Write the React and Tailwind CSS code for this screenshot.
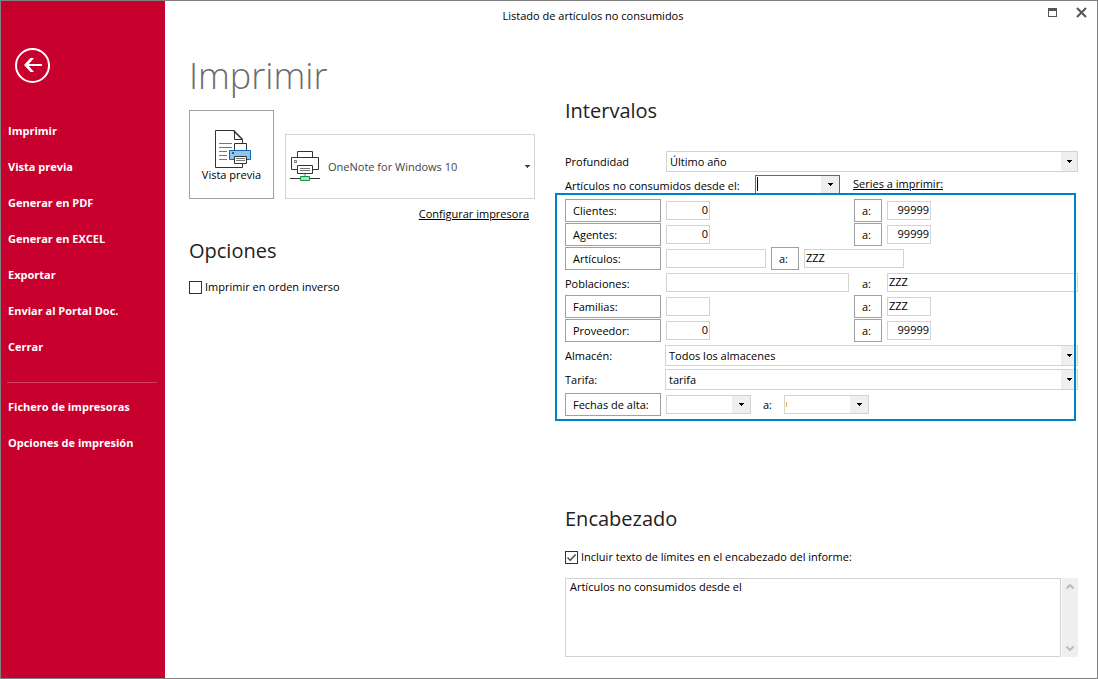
import React, { useState } from "react";

const mainLinks = [
  "Imprimir",
  "Vista previa",
  "Generar en PDF",
  "Generar en EXCEL",
  "Exportar",
  "Enviar al Portal Doc.",
  "Cerrar",
];
const extraLinks = ["Fichero de impresoras", "Opciones de impresión"];

const Arrow = ({ className = "" }) => (
  <svg width="5" height="3" viewBox="0 0 5 3" className={className} shapeRendering="crispEdges" aria-hidden="true">
    <path d="M0 0h5v1H0zM1 1h3v1H1zM2 2h1v1H2z" fill="currentColor" />
  </svg>
);

const BackIcon = () => (
  <svg width="36" height="36" viewBox="0 0 36 36" fill="none" stroke="#fff" aria-hidden="true">
    <circle cx="17.5" cy="17.5" r="16.5" strokeWidth="2" />
    <path d="M27 17H10" strokeWidth="2" />
    <path d="M19 10h-3.500L9 17l6.500 7H19l-6-7z" fill="#fff" stroke="none" />
  </svg>
);

const PreviewIcon = () => (
  <svg width="37" height="39" viewBox="0 0 37 39" fill="none" className="ml-1" aria-hidden="true">
    <path d="M27.5 37.5H.5V.5h18l9 9v28z" fill="#fff" stroke="#333" />
    <path d="M19.500 .5v9h8" stroke="#333" />
    <path d="M18.500 .5l9 9" stroke="#333" strokeWidth="1.500" />
    <path d="M4 13.5h13M4 17.500h13M4 21.500h8M4 25.500h8M4 29.500h8" stroke="#777" />
    <path d="M19.500 13.500h12v7h-12z" fill="#fff" stroke="#333" />
    <path d="M14.500 20.500h21v9h-21z" fill="#8fc4ef" stroke="#1167b4" />
    <path d="M17 22h2v2h-2z" fill="#1167b4" />
    <path d="M19.500 26.500h12v7h-12z" fill="#fff" stroke="#333" />
    <path d="M21 28.500h9M21 30.500h9" stroke="#777" />
  </svg>
);

const PrinterIcon = () => (
  <svg width="30" height="31" viewBox="0 0 30 31" fill="none" aria-hidden="true">
    <path d="M7.500 .5h15v6h-15zM1.500 6.500h27v12h-27z" fill="#fff" stroke="#333" />
    <path d="M4.500 9.500h2v2h-2z" stroke="#777" />
    <path d="M7.500 14.500h15v8h-15z" fill="#fff" stroke="#333" />
    <path d="M10 17.500h10M10 19.500h10" stroke="#777" />
    <path d="M15 23v2" stroke="#bbb" strokeWidth="2" />
    <path d="M0 27.500h30" stroke="#333" />
    <path d="M10.500 25.500h9v4h-9z" fill="#b5e0bf" stroke="#12933c" />
  </svg>
);

const Heading = ({ children }) => (
  <h2 className="text-[20px] leading-7 text-[#222]">{children}</h2>
);

const BoxButton = ({ children, className = "" }) => (
  <button type="button" className={`h-[23px] border border-[#a0a0a0] bg-white pl-[7px] text-left ${className}`}>
    {children}
  </button>
);

const Field = ({ label, value = "", className = "" }) => (
  <input
    type="text"
    aria-label={label}
    defaultValue={value}
    className={`h-[19px] border border-[#d3d3d3] bg-white px-px pb-[2px] outline-none ${className}`}
  />
);

const Select = ({ id, options }) => (
  <div className="relative min-w-0 flex-1">
    <select id={id} className="block h-[21px] w-full appearance-none border border-[#d3d3d3] bg-white pl-[3px] pr-5 outline-none">
      {options.map((option) => (
        <option key={option}>{option}</option>
      ))}
    </select>
    <span className="pointer-events-none absolute inset-y-px right-px flex w-4 items-center justify-center bg-[#efefef]">
      <Arrow />
    </span>
  </div>
);

const DateBox = ({ label, active, children }) => (
  <div className={`relative flex h-[19px] w-[85px] border bg-white ${active ? "border-[#666]" : "border-[#d3d3d3]"}`}>
    <input type="text" aria-label={label} className="min-w-0 flex-1 px-1 outline-none" />
    <button type="button" aria-label={`Abrir ${label}`} className="flex w-[18px] items-center justify-center bg-[#efefef]">
      <Arrow />
    </button>
    {children}
  </div>
);

const Check = ({ label, checked, onChange }) => (
  <label className="flex items-center gap-[3px]">
    <span className="relative size-[13px]">
      <input
        type="checkbox"
        checked={checked}
        onChange={(e) => onChange(e.target.checked)}
        className="block size-[13px] appearance-none border border-[#333] bg-white"
      />
      {checked && (
        <svg viewBox="0 0 13 13" className="pointer-events-none absolute inset-0 size-[13px]" fill="none" stroke="#444" aria-hidden="true">
          <path d="M2.500 6.500l2.700 2.700 5.500-5.700" strokeWidth="1.400" />
        </svg>
      )}
    </span>
    {label}
  </label>
);

// label | from | "a:" | to
const RangeRow = ({ label, from, to, numeric, small = true }) => (
  <div className="grid h-[23px] grid-cols-[96px_183px_28px_1fr] items-center gap-x-[5px]">
    {small ? <BoxButton>{label}:</BoxButton> : <span className="pt-[2px]">{label}:</span>}
    <Field
      label={`${label} desde`}
      value={from}
      className={`${small ? "w-11" : "w-full"} ${numeric ? "text-right" : ""}`}
    />
    {small ? <BoxButton>a:</BoxButton> : <span className="pt-[2px] pl-2">a:</span>}
    <Field
      label={`${label} hasta`}
      value={to}
      className={`${small ? "w-11" : "w-full"} ${numeric ? "text-right" : ""}`}
    />
  </div>
);

const Sidebar = () => (
  <nav className="w-[164px] shrink-0 bg-[#c8002d] text-[11px] font-bold text-white">
    <button type="button" aria-label="Volver" className="mt-[47px] ml-[14px] block">
      <BackIcon />
    </button>
    <ul className="mt-[29px] pl-[7px]">
      {mainLinks.map((link) => (
        <li key={link} className="flex h-9 items-center">
          <a href="#">{link}</a>
        </li>
      ))}
    </ul>
    <hr className="mt-[17px] mr-2 ml-[6px] border-[#d5405f]" />
    <ul className="mt-[6px] pl-[7px]">
      {extraLinks.map((link) => (
        <li key={link} className="flex h-9 items-center">
          <a href="#">{link}</a>
        </li>
      ))}
    </ul>
  </nav>
);

const TitleBar = () => (
  <header className="flex h-[30px] items-center">
    <h1 className="flex-1 text-center">Listado de artículos no consumidos</h1>
    <div className="flex w-[76px] items-center justify-end gap-[19px] pr-[10px] pb-2">
      <button type="button" aria-label="Maximizar">
        <svg width="9" height="9" viewBox="0 0 9 9" shapeRendering="crispEdges" className="block" aria-hidden="true">
          <path d="M0 0h9v9H0zM1 3v5h7V3z" fill="#555" fillRule="evenodd" />
        </svg>
      </button>
      <button type="button" aria-label="Cerrar ventana">
        <svg width="11" height="11" viewBox="0 0 11 11" stroke="#555" strokeWidth="2" className="block" aria-hidden="true">
          <path d="M1 1l9 9M10 1l-9 9" />
        </svg>
      </button>
    </div>
  </header>
);

const PrintPanel = () => {
  const [reverse, setReverse] = useState(false);

  return (
    <section className="w-[346px] shrink-0">
      <h2 className="mt-4 text-[36px] leading-[58px] font-light text-[#6f696b]">Imprimir</h2>
      <div className="mt-[5px] flex items-end gap-[11px]">
        <button
          type="button"
          className="flex h-[89px] w-[85px] flex-col items-center border border-[#a0a0a0] bg-white pt-[19px]"
        >
          <PreviewIcon />
          <span className="leading-3">Vista previa</span>
        </button>
        <div className="relative flex-1">
          <select
            aria-label="Impresora"
            className="block h-[65px] w-full appearance-none border border-[#d3d3d3] bg-white pl-[42px] text-[#444] outline-none"
          >
            <option>OneNote for Windows 10</option>
          </select>
          <span className="pointer-events-none absolute inset-y-0 left-[5px] flex items-center">
            <PrinterIcon />
          </span>
          <span className="pointer-events-none absolute inset-y-0 right-[5px] flex items-center text-[#444]">
            <Arrow />
          </span>
        </div>
      </div>
      <div className="mt-[7px] pr-[6px] text-right">
        <a href="#" className="underline">Configurar impresora</a>
      </div>
      <div className="mt-[15px]">
        <Heading>Opciones</Heading>
      </div>
      <div className="mt-[14px]">
        <Check label="Imprimir en orden inverso" checked={reverse} onChange={setReverse} />
      </div>
    </section>
  );
};

const RangesPanel = () => {
  const [includeLimits, setIncludeLimits] = useState(true);

  return (
    <section className="min-w-0 flex-1">
      <div className="mt-[66px]">
        <Heading>Intervalos</Heading>
      </div>

      <div className="mt-[26px] flex items-center gap-[5px]">
        <label htmlFor="depth" className="w-24">Profundidad</label>
        <Select id="depth" options={["Último año"]} />
      </div>
      <div className="mt-[3px] flex">
        <span className="w-[190px] pt-[3px]">Artículos no consumidos desde el:</span>
        <DateBox label="Artículos no consumidos desde el" active>
          <span className="absolute top-px left-px h-[14px] w-px bg-black" />
        </DateBox>
        <a href="#" className="ml-[13px] pt-px underline">Series a imprimir:</a>
      </div>

      <div className="relative mt-[5px]">
        <div className="flex flex-col gap-px">
          <RangeRow label="Clientes" from="0" to="99999" numeric />
          <RangeRow label="Agentes" from="0" to="99999" numeric />
          <div className="flex h-[23px] items-center gap-[5px]">
            <BoxButton className="w-24">Artículos:</BoxButton>
            <Field label="Artículos desde" className="w-[100px]" />
            <BoxButton className="w-7">a:</BoxButton>
            <Field label="Artículos hasta" value="ZZZ" className="w-[100px]" />
          </div>
          <RangeRow label="Poblaciones" to="ZZZ" small={false} />
          <RangeRow label="Familias" to="ZZZ" />
          <RangeRow label="Proveedor" from="0" to="99999" numeric />
        </div>
        <div className="mt-[3px] flex flex-col gap-[3px]">
          <div className="flex items-center gap-1">
            <label htmlFor="warehouse" className="w-24">Almacén:</label>
            <Select id="warehouse" options={["Todos los almacenes"]} />
          </div>
          <div className="flex items-center gap-1">
            <label htmlFor="rate" className="w-24">Tarifa:</label>
            <Select id="rate" options={["tarifa"]} />
          </div>
          <div className="flex items-center gap-[5px]">
            <BoxButton className="w-24">Fechas de alta:</BoxButton>
            <DateBox label="Fecha de alta desde" />
            <span className="w-[23px] text-center">a:</span>
            <DateBox label="Fecha de alta hasta">
              <span className="absolute top-[6px] left-px h-[5px] w-px bg-[#e9a94b]" />
            </DateBox>
          </div>
        </div>
        {/* highlight frame, drawn over the fields */}
        <div className="pointer-events-none absolute -top-[6px] right-[2px] -bottom-[5px] -left-[10px] border-2 border-[#0082c8]" />
      </div>

      <div className="mt-[89px]">
        <Heading>Encabezado</Heading>
      </div>
      <div className="mt-4">
        <Check
          label="Incluir texto de límites en el encabezado del informe:"
          checked={includeLimits}
          onChange={setIncludeLimits}
        />
      </div>
      <div className="mt-[13px] flex h-[79px] gap-px">
        <textarea
          aria-label="Texto del encabezado"
          defaultValue="Artículos no consumidos desde el"
          className="min-w-0 flex-1 resize-none overflow-hidden border border-[#d3d3d3] bg-white px-1 outline-none"
        />
        <div className="flex w-4 flex-col items-center justify-between bg-[#efefef] py-[5px]">
          <svg width="8" height="7" viewBox="0 0 8 7" fill="none" stroke="#bcbcbc" strokeWidth="2" aria-hidden="true">
            <path d="M.5 5.500L4 2l3.500 3.500" />
          </svg>
          <svg width="8" height="7" viewBox="0 0 8 7" fill="none" stroke="#bcbcbc" strokeWidth="2" aria-hidden="true">
            <path d="M.5 1.500L4 5l3.500-3.500" />
          </svg>
        </div>
      </div>
    </section>
  );
};

export default function App() {
  return (
    <div className="flex min-h-screen border border-[#808080] bg-white font-['Open_Sans','Noto_Sans',sans-serif] text-[11px] leading-4 text-black">
      <Sidebar />
      <main className="min-w-0 flex-1">
        <TitleBar />
        <div className="flex gap-[30px] pr-[19px] pb-5 pl-6">
          <PrintPanel />
          <RangesPanel />
        </div>
      </main>
    </div>
  );
}
